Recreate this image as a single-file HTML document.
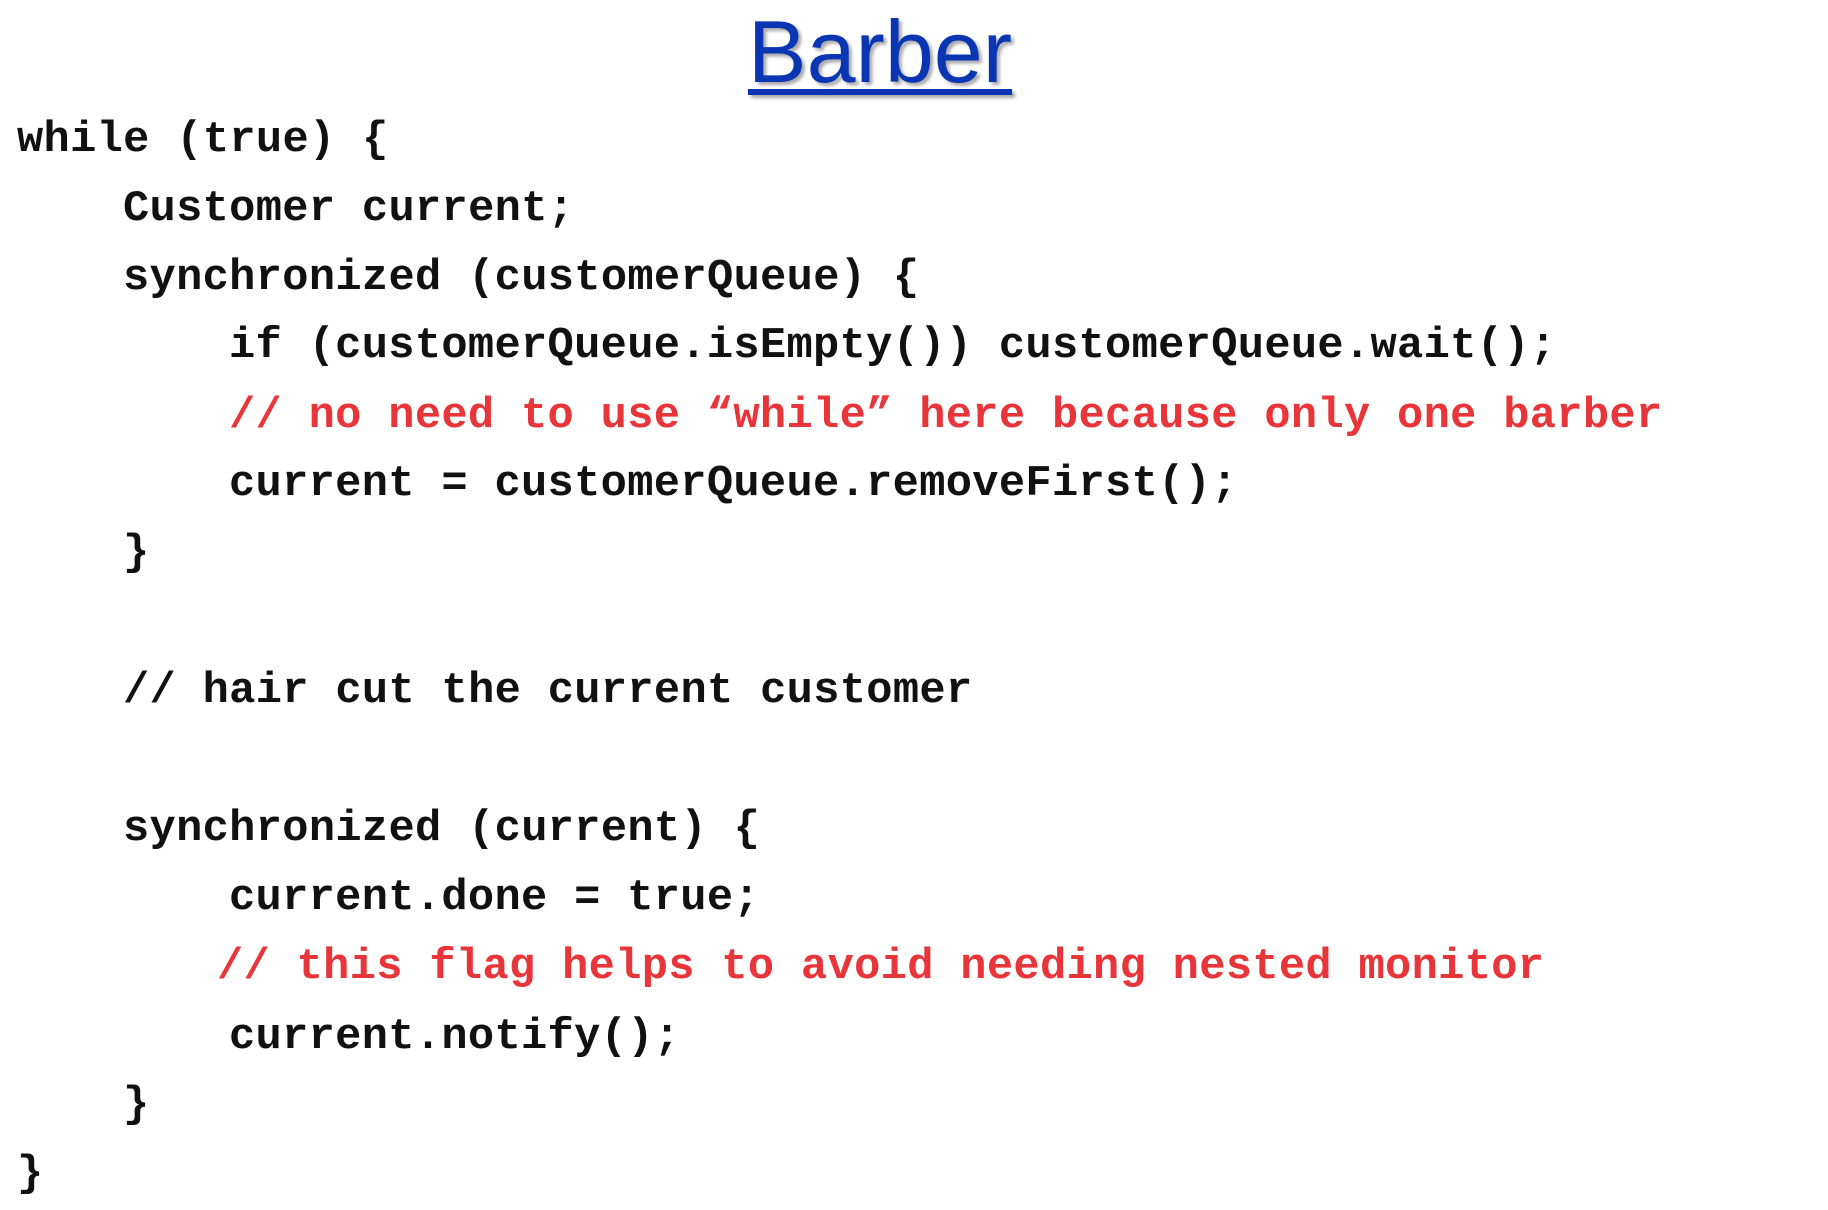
<!DOCTYPE html>
<html><head><style>
html,body{margin:0;padding:0;background:#fff;width:1828px;height:1210px;overflow:hidden;position:relative}
.t{position:absolute;left:0;width:1760px;top:0px;text-align:center;font-family:"Liberation Sans",sans-serif;font-size:88px;color:#0a36b4;text-decoration:underline;text-decoration-thickness:6px;text-underline-offset:7px;text-shadow:3px 3px 3px #aaa;line-height:104px}
.l{position:absolute;font-family:"Liberation Mono",monospace;font-weight:bold;font-size:43.7px;letter-spacing:0.33px;line-height:69px;white-space:pre;color:#111}
.r{color:#e8353a}
</style></head><body>
<div class="t">Barber</div>
<div class="l" style="left:17px;top:106px">while (true) {</div>
<div class="l" style="left:123px;top:175px">Customer current;</div>
<div class="l" style="left:123px;top:244px">synchronized (customerQueue) {</div>
<div class="l" style="left:229px;top:312px">if (customerQueue.isEmpty()) customerQueue.wait();</div>
<div class="l r" style="left:229px;top:382px">// no need to use “while” here because only one barber</div>
<div class="l" style="left:229px;top:450px">current = customerQueue.removeFirst();</div>
<div class="l" style="left:123px;top:519px">}</div>
<div class="l" style="left:123px;top:657px">// hair cut the current customer</div>
<div class="l" style="left:123px;top:795px">synchronized (current) {</div>
<div class="l" style="left:229px;top:864px">current.done = true;</div>
<div class="l r" style="left:217px;top:933px">// this flag helps to avoid needing nested monitor</div>
<div class="l" style="left:229px;top:1003px">current.notify();</div>
<div class="l" style="left:123px;top:1071px">}</div>
<div class="l" style="left:17px;top:1140px">}</div>
</body></html>
